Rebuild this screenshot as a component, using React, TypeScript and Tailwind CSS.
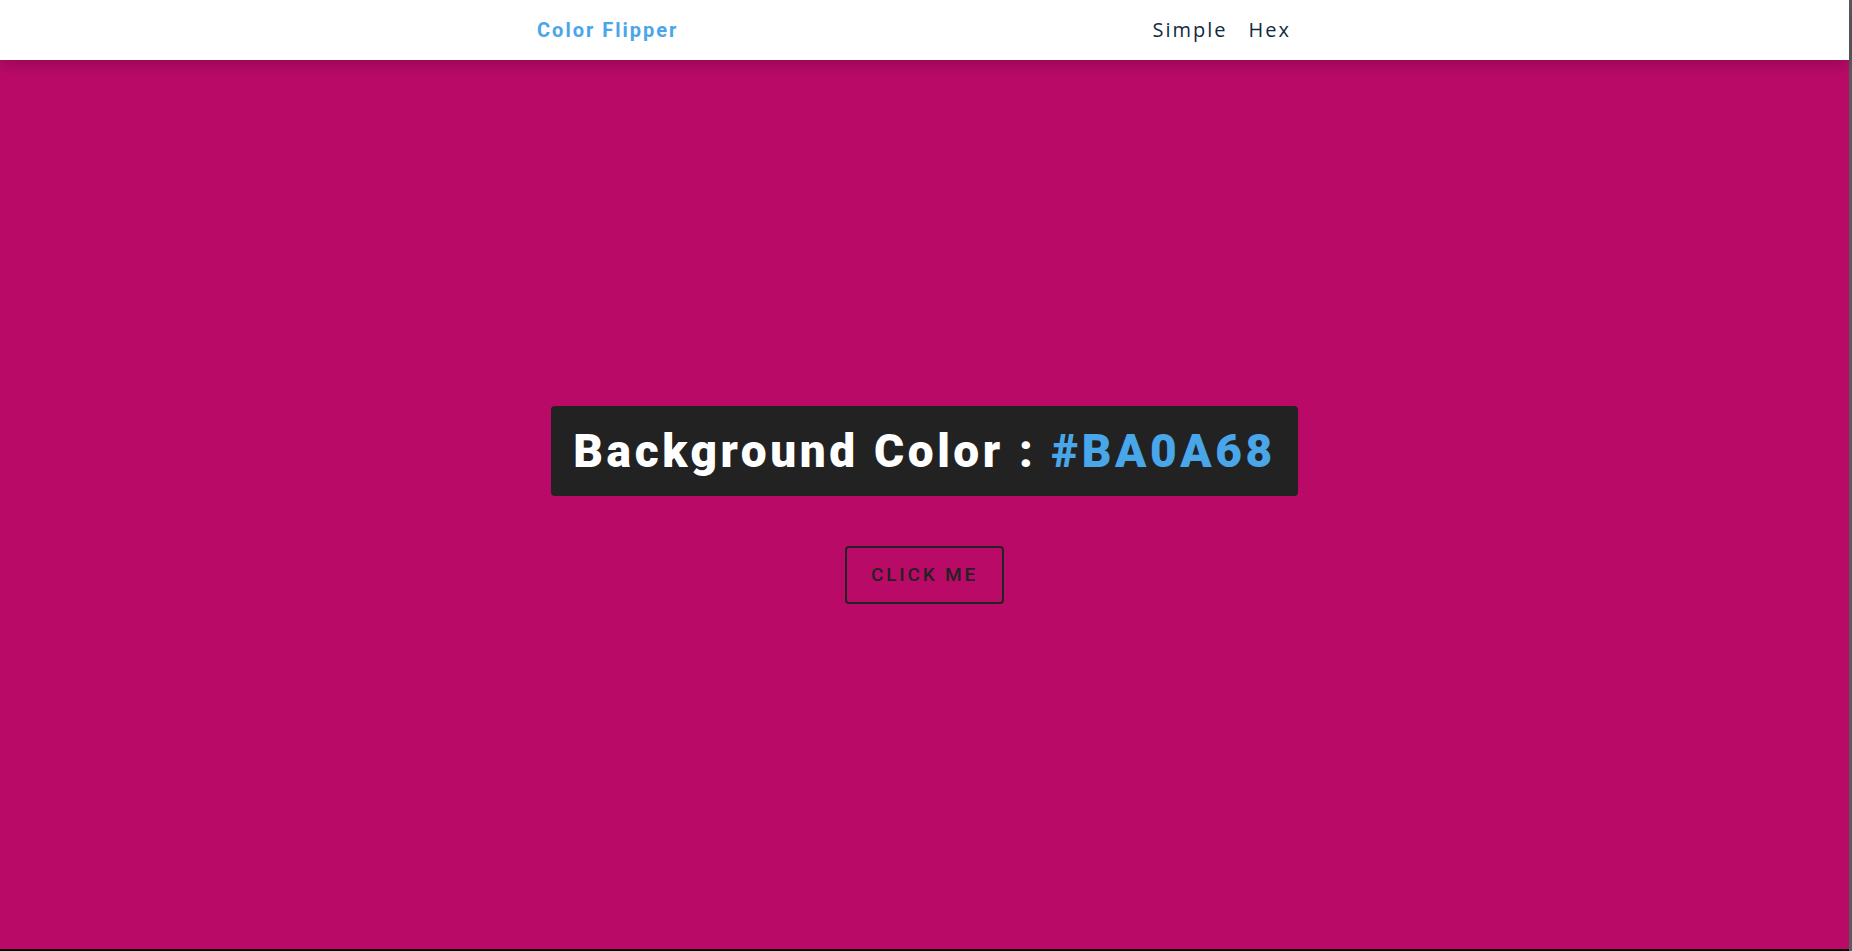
import React, { useState } from 'react';

const colors = ['#BA0A68'];

export default function App() {
  const [color] = useState(colors[0]);

  return (
    <div className="flex h-[951px] w-full overflow-hidden">
      <div className="flex min-w-0 flex-1 flex-col border-b-2 border-black" style={{ backgroundColor: color }}>
        <nav className="relative z-10 h-[60px] shrink-0 bg-white shadow-[0_5px_15px_rgba(0,0,0,0.2)]">
          <div className="mx-auto flex h-full w-[775px] items-center justify-between">
            <h4 className="font-['Roboto',sans-serif] text-[20px] font-bold tracking-[2px] text-[#49a6e9]">
              Color Flipper
            </h4>
            <ul className="flex items-center gap-[21px] pr-[21px] font-['Open_Sans',sans-serif] text-[20px] tracking-[2px] text-[#102a42]">
              <li>
                <a href="#">Simple</a>
              </li>
              <li>
                <a href="#">Hex</a>
              </li>
            </ul>
          </div>
        </nav>

        <main className="flex flex-1 flex-col items-center justify-center">
          <h2 className="rounded-[4px] bg-[#222222] py-[15px] pl-[22px] pr-[22px] font-['Roboto',sans-serif] text-[46px] font-black leading-[60px] tracking-[3.6px] text-white">
            Background Color : <span className="text-[#49a6e9]">{color}</span>
          </h2>
          <button className="mt-[50px] rounded-[4px] border-2 border-[#222222] bg-transparent px-[24px] py-[15px] font-['Roboto',sans-serif] text-[19px] font-medium uppercase leading-[24px] tracking-[2.8px] text-[#222222]">
            click me
          </button>
        </main>
      </div>
      <div className="w-[3px] shrink-0 bg-[#5b5b5b]" />
    </div>
  );
}
